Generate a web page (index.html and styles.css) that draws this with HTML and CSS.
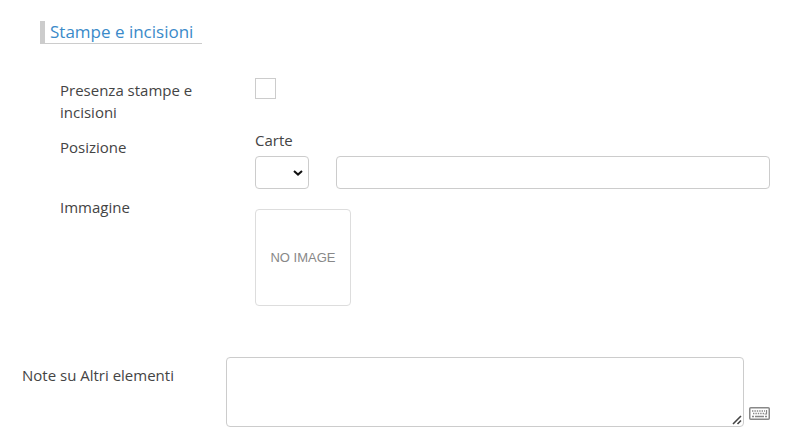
FILE: index.html
```
<!DOCTYPE html>
<html lang="it">
<head>
    <meta charset="UTF-8">
    <meta name="viewport" content="width=device-width, initial-scale=1.0">
    <title>Stampe e incisioni</title>
    <link rel="stylesheet" href="styles.css">
</head>
<body>
    <form class="scheda">
        <section class="group">
            <h2 class="group-title">Stampe e incisioni</h2>
            <div class="form-row">
                <label class="control-label" for="presenza">Presenza stampe e incisioni</label>
                <div class="controls">
                    <input type="checkbox" class="check" id="presenza" name="presenza">
                </div>
            </div>
            <div class="form-row">
                <label class="control-label" for="posizione">Posizione</label>
                <div class="controls">
                    <label class="sub-label" for="carte">Carte</label>
                    <div class="inline-fields">
                        <span class="select-wrap">
                            <select class="field" id="carte" name="carte">
                                <option></option>
                            </select>
                            <svg class="chevron" width="10" height="6" viewBox="0 0 10 6" aria-hidden="true">
                                <path d="M1 1l4 3.6L9 1" fill="none" stroke="#111" stroke-width="2"/>
                            </svg>
                        </span>
                        <input type="text" class="field" id="posizione" name="posizione">
                    </div>
                </div>
            </div>
            <div class="form-row">
                <span class="control-label">Immagine</span>
                <div class="controls">
                    <div class="thumbnail">NO IMAGE</div>
                </div>
            </div>
        </section>

        <div class="note-row">
            <label class="control-label" for="note">Note su Altri elementi</label>
            <div class="note-field">
                <textarea class="field" id="note" name="note"></textarea>
                <svg class="grip" width="10" height="10" viewBox="0 0 10 10" aria-hidden="true">
                    <path d="M1 9L9 1M5.5 9l3.5-3.5" fill="none" stroke="#444" stroke-width="1.6"/>
                </svg>
            </div>
            <button type="button" class="keyboard" aria-label="Tastiera">
                <svg width="21" height="13" viewBox="0 0 21 13" aria-hidden="true">
                    <rect x="0.75" y="0.75" width="19.5" height="11.5" rx="1" fill="#fff" stroke="#888" stroke-width="1.5"/>
                    <path d="M3 4h13M4 6.5h11" fill="none" stroke="#888" stroke-width="1.4" stroke-dasharray="1.4 1"/>
                    <path d="M17.5 3v4h-2" fill="none" stroke="#888" stroke-width="1.2"/>
                    <path d="M3 9.5h2M6 9.5h9M16 9.5h2" fill="none" stroke="#888" stroke-width="1.4"/>
                </svg>
            </button>
        </div>
    </form>
</body>
</html>
```
FILE: styles.css
```
* {
    margin: 0;
    padding: 0;
    box-sizing: border-box;
}

body {
    font-family: 'Open Sans', sans-serif;
    font-size: 15px;
    line-height: 22px;
    color: #444;
    background-color: #fff;
}

.scheda {
    padding: 21px 34px 8px 22px;
}

/* Section heading */
.group {
    padding-left: 18px;
    margin-bottom: 51px;
}

.group-title {
    width: fit-content;
    padding: 0 9px 0 5px;
    margin-bottom: 28px;
    border-left: 5px solid #ccc;
    border-bottom: 1px solid #ccc;
    color: #3a8ac9;
    font-size: 17px;
    font-weight: normal;
    line-height: 22px;
}

/* Rows */
.form-row {
    display: grid;
    grid-template-columns: 175px 1fr;
    column-gap: 20px;
    margin-left: 20px;
}

.form-row .control-label {
    padding-right: 20px;
    padding-bottom: 6px;
}

.control-label {
    padding-top: 7px;
}

.sub-label {
    display: block;
    margin-bottom: 5px;
}

.inline-fields {
    display: grid;
    grid-template-columns: 54px 1fr;
    column-gap: 27px;
}

.field {
    display: block;
    width: 100%;
    height: 33px;
    padding: 4px 8px;
    border: 1px solid #ccc;
    border-radius: 4px;
    background-color: #fff;
    color: #444;
    font: inherit;
}

.check {
    appearance: none;
    display: block;
    width: 21px;
    height: 21px;
    margin-top: 6px;
    border: 1px solid #ccc;
    background-color: #fff;
}

.check:checked {
    background-color: #428bca;
}

.select-wrap {
    position: relative;
}

.select-wrap .field {
    appearance: none;
}

.chevron {
    position: absolute;
    top: 14px;
    right: 6px;
    pointer-events: none;
}

.thumbnail {
    display: flex;
    align-items: center;
    justify-content: center;
    width: 96px;
    height: 97px;
    margin-top: 20px;
    border: 1px solid #ddd;
    border-radius: 4px;
    color: #888;
    font-family: 'Liberation Sans', Arial, sans-serif;
    font-size: 13px;
}

/* Notes */
.note-row {
    display: grid;
    grid-template-columns: 204px 1fr 21px;
}

.note-field {
    position: relative;
    margin-right: 5px;
}

.note-field .field {
    height: 70px;
    resize: none;
}

.grip {
    position: absolute;
    right: 2px;
    bottom: 2px;
    pointer-events: none;
}

.keyboard {
    align-self: end;
    height: 13px;
    margin-bottom: 7px;
    border: none;
    background: none;
    cursor: pointer;
}

.keyboard svg {
    display: block;
}
```
